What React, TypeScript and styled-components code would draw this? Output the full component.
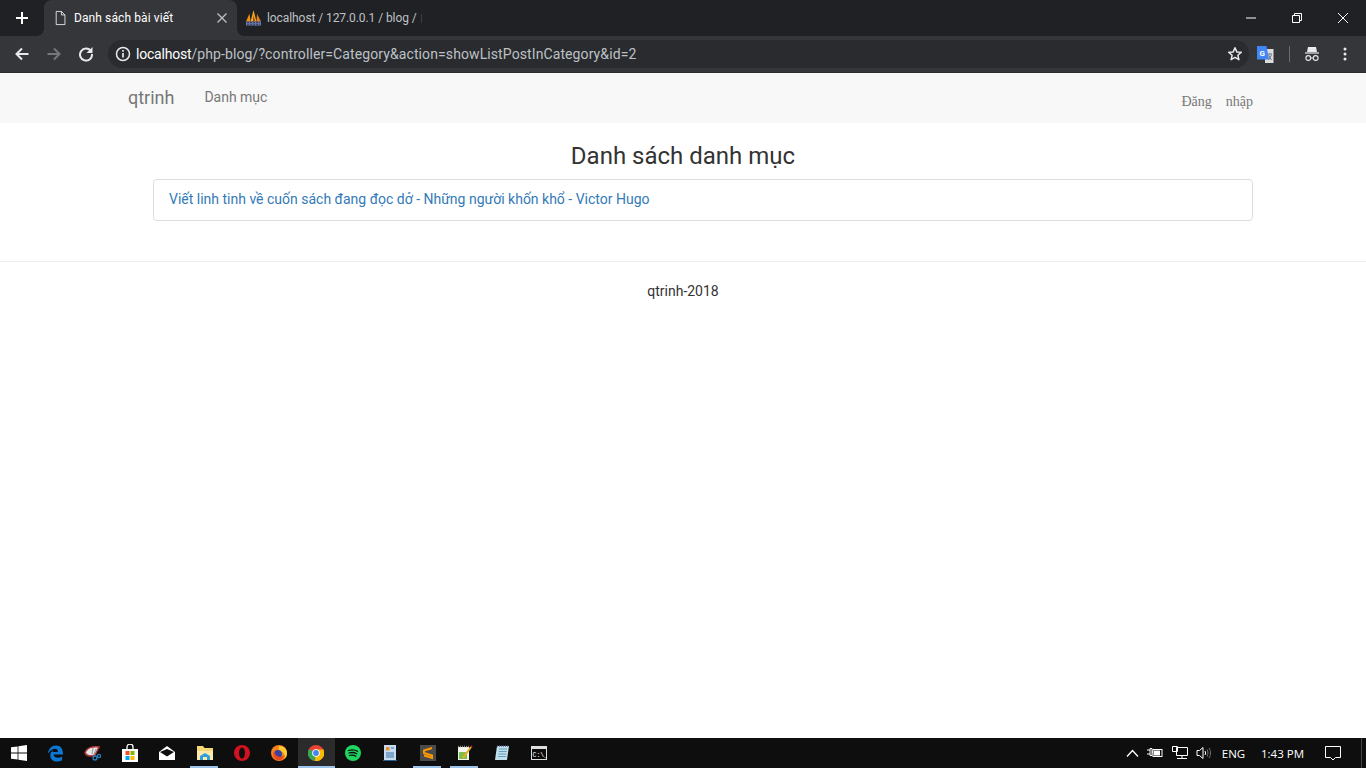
import React from "react";
import styled, { createGlobalStyle } from "styled-components";

const Global = createGlobalStyle`
  html, body { margin: 0; padding: 0; height: 100%; background: #fff; overflow: hidden; }
  #root { height: 100%; }
  * { box-sizing: border-box; }
`;

const Screen = styled.div`
  width: 1366px; height: 768px; display: flex; flex-direction: column;
  font-family: Roboto, "Noto Sans", sans-serif; color: #333;
`;
const TabStrip = styled.div`
  height: 36px; background: #202124; display: flex; flex: none;
`;
const NewTab = styled.div`
  width: 44px; display: flex; align-items: center; justify-content: center;
`;
const ActiveTab = styled.div`
  position: relative;
  width: 193px; height: 36px; background: #35363a; border-radius: 8px 8px 0 0;
  display: flex; align-items: center; padding: 0 9px 0 10px; color: #fff;
  font: 400 12px Roboto, sans-serif;
  &::before, &::after { content: ""; position: absolute; bottom: 0; width: 8px; height: 8px; }
  &::before { left: -8px; background: radial-gradient(circle at 0 0, transparent 8px, #35363a 8px); }
  &::after { right: -8px; background: radial-gradient(circle at 100% 0, transparent 8px, #35363a 8px); }
`;
const TabLabel = styled.span`
  flex: 1; margin-left: 6px; white-space: nowrap; letter-spacing: 0.1px;
`;
const InactiveTab = styled.div`
  width: 190px; height: 36px; display: flex; align-items: center; padding-left: 8px;
  color: #bdc1c6; font: 400 12px Roboto, sans-serif; white-space: nowrap;
`;
const InactiveLabel = styled.span`
  margin-left: 5px; font-size: 12px; letter-spacing: -0.08px;
  display: inline-flex; align-items: center;
  &::after { content: ""; width: 1px; height: 9px; margin-left: 4px; background: #3d3e42; }
`;
const WindowControls = styled.div`
  margin-left: auto; display: flex; height: 36px;
`;
const WinButton = styled.div`
  width: 46px; display: flex; align-items: center; justify-content: center;
`;
const Toolbar = styled.div`
  height: 37px; background: #35363a; border-bottom: 1px solid #2b2c2f;
  display: flex; align-items: center; flex: none;
`;
const NavButton = styled.div`
  width: 32px; display: flex; align-items: center; justify-content: center;
`;
const NavGroup = styled.div`
  display: flex; padding-left: 6px; width: 108px;
`;
const Omnibox = styled.div`
  width: 1141px; height: 28px; background: #292b2e; border-radius: 14px;
  display: flex; align-items: center; padding: 0 6px 0 7px;
`;
const Url = styled.div`
  margin-left: 5px; font: 400 14px Roboto, sans-serif; color: #bdc1c6; white-space: nowrap; flex: 1;
  letter-spacing: 0.1px;
`;
const Host = styled.span` color: #fff; letter-spacing: -0.2px; `;
const Extensions = styled.div`
  flex: 1; display: flex; align-items: center; padding-left: 8px;
`;
const Divider = styled.div`
  width: 1px; height: 16px; background: #6a6c70; margin: 0 15px 0 15px;
`;
const ProfileIcon = styled.div` width: 14px; display: flex; `;
const Kebab = styled.div` margin-left: 24px; display: flex; `;
const Page = styled.div` flex: 1; background: #fff; display: flex; flex-direction: column; `;
const NavBar = styled.nav`
  height: 50px; background: #f8f8f8; display: flex; flex: none; padding: 0 113px 0 128px;
`;
const Brand = styled.a`
  font: 400 18px/49px Roboto, sans-serif; color: #777;
`;
const NavLink = styled.a`
  font: 400 14px/48px Roboto, sans-serif; color: #777; margin-left: 30px; letter-spacing: -0.02px;
`;
const NavRight = styled.div`
  margin-left: auto; font: 400 14px/57px "Liberation Serif", serif; color: #777;
  display: flex; gap: 14px;
`;
const Title = styled.h2`
  margin: 20px 0 10px; text-align: center; font: 400 24px/26px Roboto, sans-serif; color: #333;
`;
const ListGroup = styled.div`
  margin: 0 113px 0 153px; height: 42px; border: 1px solid #ddd; border-radius: 4px;
  padding: 0 15px 2px; display: flex; align-items: center; background: #fff;
`;
const ListLink = styled.a`
  font: 400 14px Roboto, sans-serif; color: #337ab7;
`;
const Rule = styled.hr`
  margin: 40px 0 0; border: 0; border-top: 1px solid #eee; height: 0;
`;
const Footer = styled.p`
  margin: 21px 0 0; text-align: center; font: 400 14px/17px Roboto, sans-serif; color: #333;
`;
const Taskbar = styled.div`
  height: 30px; background: #0e0e0e; display: flex; align-items: stretch; flex: none;
`;
const TaskItem = styled.div<{ $running?: boolean; $active?: boolean }>`
  position: relative;
  width: 37.2px; display: flex; align-items: center; justify-content: center; flex: none;
  background: ${p => (p.$active ? "#2b2b2b" : "transparent")};
  &::after {
    content: ${p => (p.$running ? '""' : "none")};
    position: absolute; bottom: 0; height: 2px; background: #9cc3ea;
    left: ${p => (p.$active ? "0" : "4px")};
    right: ${p => (p.$active ? "0" : "5px")};
  }
`;
const Tray = styled.div`
  margin-left: auto; display: flex; align-items: center; color: #fff;
  font: 400 11.5px "Open Sans", Roboto, sans-serif; height: 30px;
`;
const TrayIcon = styled.div<{ $w: number }>`
  width: ${p => p.$w}px; display: flex; align-items: center; justify-content: center;
`;
const TrayText = styled.span<{ $w: number }>`
  width: ${p => p.$w}px; text-align: center; white-space: nowrap;
`;
const ShowDesktop = styled.div`
  width: 5px; height: 30px; border-left: 1px solid #444; margin-left: 9px;
`;

const S = (p: React.SVGProps<SVGSVGElement>) => <svg width="16" height="16" viewBox="0 0 16 16" fill="none" {...p} />;

const PHPMyAdmin = () => (
  <svg width="17" height="16" viewBox="0 0 17 16">
    <path d="M1 11.500 4.500 3.500l1 8z" fill="#f29111" />
    <path d="M5.500 11.500 8.500 0l3 11.500z" fill="#f4a41f" />
    <path d="M11.500 11.500 12 4l4 7.500z" fill="#e8821a" />
    <path d="M8 11.500 8.500 5l1.500 6.500z" fill="#7a4210" />
    <rect x="1" y="11.500" width="15" height="4" fill="#6c78a8" />
    <path d="M2 12.500h13M2 14.300h13" stroke="#2d3050" strokeWidth=".8" strokeDasharray="2 1" />
  </svg>
);

export default function App() {
  return (
    <Screen>
      <Global />
      <TabStrip>
        <NewTab>
          <S><path d="M8 2v12M2 8h12" stroke="#fff" strokeWidth="2" /></S>
        </NewTab>
        <ActiveTab>
          <S width="14" height="16"><path d="M2.500.500h6l4 4v11h-10zM8.500.500v4h4" stroke="#e8eaed" strokeWidth="1" /></S>
          <TabLabel>Danh sách bài viết</TabLabel>
          <S width="12" height="12" viewBox="0 0 12 12"><path d="M1.500 1.500l9 9M10.500 1.500l-9 9" stroke="#bdc1c6" strokeWidth="1.300" /></S>
        </ActiveTab>
        <InactiveTab>
          <PHPMyAdmin />
          <InactiveLabel>localhost / 127.0.0.1 / blog /</InactiveLabel>
        </InactiveTab>
        <WindowControls>
          <WinButton><S width="12" height="12" viewBox="0 0 12 12"><path d="M1 6h10" stroke="#fff" /></S></WinButton>
          <WinButton><S width="12" height="12" viewBox="0 0 12 12"><path d="M1.500 3.500h7v7h-7zM3.500 3.500v-2h7v7h-2" stroke="#fff" /></S></WinButton>
          <WinButton><S width="12" height="12" viewBox="0 0 12 12"><path d="M1 1l10 10M11 1L1 11" stroke="#fff" /></S></WinButton>
        </WindowControls>
      </TabStrip>
      <Toolbar>
        <NavGroup>
          <NavButton><S><path d="M14.500 8h-12M8 2.500 2.500 8 8 13.500" stroke="#e8eaed" strokeWidth="2" /></S></NavButton>
          <NavButton><S><path d="M1.500 8h12M8 2.500 13.500 8 8 13.500" stroke="#75777a" strokeWidth="2" /></S></NavButton>
          <NavButton><S><path d="M13 5.200A6 6 0 1 0 14 8" stroke="#e8eaed" strokeWidth="2" /><path d="M14.500 1v6h-6z" fill="#e8eaed" /></S></NavButton>
        </NavGroup>
        <Omnibox>
          <S><circle cx="8" cy="8" r="6.500" stroke="#e8eaed" strokeWidth="1.500" /><path d="M8 7v4.500" stroke="#e8eaed" strokeWidth="1.700" /><path d="M8 4v1.800" stroke="#e8eaed" strokeWidth="1.700" /></S>
          <Url><Host>localhost</Host>/php-blog/?controller=Category&amp;action=showListPostInCategory&amp;id=2</Url>
          <S><path d="M8 1.800l1.800 4.100 4.500.4-3.400 3 1 4.400L8 11.400l-3.900 2.300 1-4.400-3.400-3 4.500-.4z" stroke="#e8eaed" strokeWidth="1.500" strokeLinejoin="round" /></S>
        </Omnibox>
        <Extensions>
          <S width="17" height="17" viewBox="0 0 17 17">
            <path d="M8 3h8.500v14H8z" fill="#dadce0" />
            <path d="M11 8h4M13 7.500v1M11.500 14l3-5M11.500 9l3 5" stroke="#70757a" strokeWidth="1" />
            <path d="M0 0h9.500L12 13.500H0z" fill="#4285f4" />
            <text x="2.500" y="9.500" fontFamily="Roboto" fontSize="8" fontWeight="700" fill="#fff">G</text>
          </S>
          <Divider />
          <ProfileIcon>
            <S width="14" height="14" viewBox="0 0 14 14"><path d="M3 0h8l1 5H2z" fill="#e8eaed" /><path d="M0 6h14" stroke="#e8eaed" strokeWidth="1.200" /><circle cx="3.300" cy="11" r="2.400" stroke="#e8eaed" strokeWidth="1.100" /><circle cx="10.700" cy="11" r="2.400" stroke="#e8eaed" strokeWidth="1.100" /><path d="M5.700 11h2.600" stroke="#e8eaed" /></S>
          </ProfileIcon>
          <Kebab>
            <S width="4" height="14" viewBox="0 0 4 14"><circle cx="2" cy="2" r="1.500" fill="#e8eaed" /><circle cx="2" cy="7" r="1.500" fill="#e8eaed" /><circle cx="2" cy="12" r="1.500" fill="#e8eaed" /></S>
          </Kebab>
        </Extensions>
      </Toolbar>
      <Page>
        <NavBar>
          <Brand>qtrinh</Brand>
          <NavLink>Danh mục</NavLink>
          <NavRight><span>Đăng</span><span>nhập</span></NavRight>
        </NavBar>
        <Title>Danh sách danh mục</Title>
        <ListGroup><ListLink>Viết linh tinh về cuốn sách đang đọc dở - Những người khốn khổ - Victor Hugo</ListLink></ListGroup>
        <Rule />
        <Footer>qtrinh-2018</Footer>
      </Page>
      <Taskbar>
        <TaskItem>
          <S viewBox="0 0 16 16"><path d="M0 2.300 6.600 1.400v6.200H0zM7.400 1.300 16 0v7.600H7.400zM0 8.400h6.600v6.200L0 13.700zM7.400 8.400H16V16l-8.600-1.300z" fill="#fff" /></S>
        </TaskItem>
        <TaskItem>
          <S width="17" height="17" viewBox="0 0 18 18"><path d="M1 9C1.500 4 5 .5 9.500.5c5 0 7.500 3.500 7.500 9.500H7c.3 3.800 5.500 4.500 9 2.200v4c-5.500 2.800-12.500 1-12.500-5.200 0-3 1.500-5 3.500-6-1 1-1.300 2-1.300 2.500h5.800C11.500 5 10.500 4 9 4 6 4 3 6 1 9z" fill="#0a78d4" /></S>
        </TaskItem>
        <TaskItem>
          <S width="18" height="18" viewBox="0 0 18 18"><path d="M1 9C3 3 10 2 15 3l-4 8C7 12.500 3 12 1 9z" fill="#e6e6e6" stroke="#b03a3a" strokeWidth="1.500" /><path d="M9 4 8 10M12 5l-2 5" stroke="#999" /><circle cx="11" cy="14" r="2" stroke="#2a7fc0" strokeWidth="1.300" /><circle cx="15" cy="12" r="1.600" stroke="#2a7fc0" strokeWidth="1.300" /></S>
        </TaskItem>
        <TaskItem>
          <S width="16" height="18" viewBox="0 0 16 18"><path d="M0 5h16v13H0z" fill="#fff" /><path d="M5 5V3a3 3 0 0 1 6 0v2" stroke="#fff" strokeWidth="1.300" /><rect x="3.500" y="7" width="4" height="4" fill="#f25022" /><rect x="8.500" y="7" width="4" height="4" fill="#7fba00" /><rect x="3.500" y="12" width="4" height="4" fill="#00a4ef" /><rect x="8.500" y="12" width="4" height="4" fill="#ffb900" /></S>
        </TaskItem>
        <TaskItem>
          <S width="16" height="14" viewBox="0 0 16 14"><path d="M0 6 8 0l8 6v8H0z" fill="#fff" /><path d="M1 6 8 10.500 15 6 8 3z" fill="#0e0e0e" /></S>
        </TaskItem>
        <TaskItem $running>
          <S width="16" height="16" viewBox="0 0 16 16"><path d="M0 1h6l1.500 2H16v12H0z" fill="#f7d774" /><path d="M0 6h16v9H0z" fill="#ffe9a8" /><path d="M3 15v-4l5-3 5 3v4H10v-3H6v3z" fill="#2f9fe0" /></S>
        </TaskItem>
        <TaskItem>
          <S width="16" height="16" viewBox="0 0 16 16"><circle cx="8" cy="8" r="8" fill="#d3121f" /><ellipse cx="8" cy="8" rx="3" ry="5.500" fill="#0e0e0e" /></S>
        </TaskItem>
        <TaskItem>
          <S width="16" height="16" viewBox="0 0 16 16"><circle cx="8" cy="8" r="8" fill="#f5811e" /><path d="M8 1c5 0 8 3 8 7 0 3-1 5-3 6 1-3 0-6-2-7-1 1-4 0-3-6z" fill="#ffcb2e" /><circle cx="7" cy="9" r="4" fill="#3b3fa0" /><path d="M3 6c1 5 6 8 11 4-1 4-5 6-8 5C3 14 1 10 3 6z" fill="#e8491d" /></S>
        </TaskItem>
        <TaskItem $active $running>
          <S width="16" height="16" viewBox="0 0 16 16"><circle cx="8" cy="8" r="8" fill="#ea4335" /><path d="M8 8 1 4a8 8 0 0 0 6 12z" fill="#34a853" /><path d="M8 4.500h7.500A8 8 0 0 1 7 16z" fill="#fbbc05" /><circle cx="8" cy="8" r="3.800" fill="#fff" /><circle cx="8" cy="8" r="2.900" fill="#4285f4" /></S>
        </TaskItem>
        <TaskItem>
          <S width="16" height="16" viewBox="0 0 16 16"><circle cx="8" cy="8" r="8" fill="#1ed760" /><path d="M3.500 5.500c3-1 6.500-.7 9 .8M4 8c2.500-.8 5.500-.5 7.800.8M4.500 10.500c2-.6 4.500-.4 6.300.7" stroke="#0e0e0e" strokeWidth="1.300" strokeLinecap="round" /></S>
        </TaskItem>
        <TaskItem>
          <S width="14" height="16" viewBox="0 0 14 16"><path d="M1 0h12v15H1z" fill="#c5dcf2" /><path d="M3 2h3.500v3.500H3z" fill="#e8922d" /><path d="M8 3h3M3 8h8M3 10h8M3 12h8" stroke="#3a6ea5" /><path d="M0 15h14v1H0z" fill="#2a5d90" /></S>
        </TaskItem>
        <TaskItem $running>
          <S width="16" height="16" viewBox="0 0 16 16"><rect width="16" height="16" fill="#4a4a4a" /><path d="M12 3 4 5.500V8l8 2.500V13L4 10.500" stroke="#ff9800" strokeWidth="2" fill="none" /></S>
        </TaskItem>
        <TaskItem $running>
          <S width="16" height="16" viewBox="0 0 16 16"><path d="M1 2h11v13H1z" fill="#f5f5f0" /><path d="M2 7h8v7H2z" fill="#7cc04b" /><path d="M1 1.500h11" stroke="#888" strokeWidth="1.500" strokeDasharray="1 1" /><path d="M6 13 14 2" stroke="#e8b020" strokeWidth="2" /><path d="M14 2l1-1" stroke="#c02020" strokeWidth="2" /></S>
        </TaskItem>
        <TaskItem>
          <S width="16" height="16" viewBox="0 0 16 16"><path d="M3 1h12l-2 14H1z" fill="#bfe0ee" /><path d="M5 4h8M4.700 6.500h8M4.300 9h8M4 11.500h8" stroke="#6b9db8" /><path d="M3 1h12" stroke="#557" strokeWidth="1.500" strokeDasharray="1 1" /></S>
        </TaskItem>
        <TaskItem>
          <svg width="16" height="14" viewBox="0 0 16 14"><rect width="16" height="14" fill="#ddd" /><rect x="1" y="3" width="14" height="10" fill="#0c0c0c" /><text x="1.500" y="10.500" fontFamily="Liberation Mono" fontSize="6.500" fill="#fff">C:\_</text></svg>
        </TaskItem>
        <Tray>
          <TrayIcon $w={20}><S width="13" height="8" viewBox="0 0 13 8"><path d="M1 7.500l5.500-6 5.500 6" stroke="#fff" strokeWidth="1.300" /></S></TrayIcon>
          <TrayIcon $w={26}><S width="16" height="12" viewBox="0 0 16 12"><path d="M0 3h3M0 7h3M3 1.500h2v7H3zM5 5h1" stroke="#fff" /><rect x="6" y="2.500" width="9" height="7" stroke="#fff" /><rect x="7" y="3.500" width="6" height="5" fill="#fff" /></S></TrayIcon>
          <TrayIcon $w={24}><S width="16" height="14" viewBox="0 0 16 14"><path d="M4.500 1.500h11v8h-11zM10 9.500v3M5 12.500h10M.5.500h5v5h-5z" stroke="#fff" fill="#0e0e0e" /></S></TrayIcon>
          <TrayIcon $w={24}><S width="16" height="14" viewBox="0 0 16 14"><path d="M1 4.500h2.500L7 1.500v11L3.500 9.500H1z" stroke="#fff" /><path d="M9 5c.8 1.300.8 2.700 0 4" stroke="#fff" /><path d="M11 3.500c1.300 2 1.300 5 0 7M13 2c2 3 2 7 0 10" stroke="#777" /></S></TrayIcon>
          <TrayText $w={35}>ENG</TrayText>
          <TrayText $w={63}>1:43 PM</TrayText>
          <TrayIcon $w={38}><S width="16" height="15" viewBox="0 0 16 15"><path d="M.5.500h15v11h-5L8 14l-2.500-2.500h-5z" stroke="#fff" /></S></TrayIcon>
          <ShowDesktop />
        </Tray>
      </Taskbar>
    </Screen>
  );
}
